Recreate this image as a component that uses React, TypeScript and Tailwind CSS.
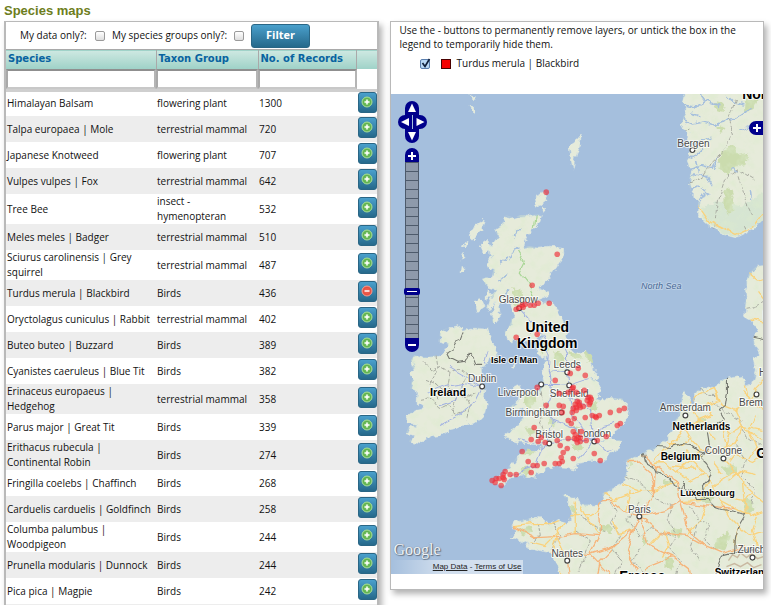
import React, { useState } from "react";

type Species = { name: string[]; group: string[]; count: string };

const species: Species[] = [
  { name: ["Himalayan Balsam"], group: ["flowering plant"], count: "1300" },
  { name: ["Talpa europaea | Mole"], group: ["terrestrial mammal"], count: "720" },
  { name: ["Japanese Knotweed"], group: ["flowering plant"], count: "707" },
  { name: ["Vulpes vulpes | Fox"], group: ["terrestrial mammal"], count: "642" },
  { name: ["Tree Bee"], group: ["insect -", "hymenopteran"], count: "532" },
  { name: ["Meles meles | Badger"], group: ["terrestrial mammal"], count: "510" },
  { name: ["Sciurus carolinensis | Grey", "squirrel"], group: ["terrestrial mammal"], count: "487" },
  { name: ["Turdus merula | Blackbird"], group: ["Birds"], count: "436" },
  { name: ["Oryctolagus cuniculus | Rabbit"], group: ["terrestrial mammal"], count: "402" },
  { name: ["Buteo buteo | Buzzard"], group: ["Birds"], count: "389" },
  { name: ["Cyanistes caeruleus | Blue Tit"], group: ["Birds"], count: "382" },
  { name: ["Erinaceus europaeus |", "Hedgehog"], group: ["terrestrial mammal"], count: "358" },
  { name: ["Parus major | Great Tit"], group: ["Birds"], count: "339" },
  { name: ["Erithacus rubecula |", "Continental Robin"], group: ["Birds"], count: "274" },
  { name: ["Fringilla coelebs | Chaffinch"], group: ["Birds"], count: "268" },
  { name: ["Carduelis carduelis | Goldfinch"], group: ["Birds"], count: "258" },
  { name: ["Columba palumbus |", "Woodpigeon"], group: ["Birds"], count: "244" },
  { name: ["Prunella modularis | Dunnock"], group: ["Birds"], count: "244" },
  { name: ["Pica pica | Magpie"], group: ["Birds"], count: "242" },
  { name: [""], group: [""], count: "" },
];

function LayerButton({ added, label, onClick }: { added: boolean; label: string; onClick: () => void }) {
  return (
    <button
      type="button"
      aria-label={label}
      onClick={onClick}
      className="flex h-[21px] w-[19px] items-start justify-center rounded-[3px] border border-[#2a6685] bg-linear-to-b from-[#4aa0cc] to-[#26698b] pt-[3px]"
    >
      <svg width="12" height="12" viewBox="0 0 12 12" aria-hidden="true">
        <circle cx="6" cy="6" r="5" fill={added ? "#ee5a4a" : "#6fbf5c"} stroke={added ? "#f59a8e" : "#a5dc97"} strokeWidth="1" />
        <circle cx="6" cy="6" r="3.6" fill="none" stroke={added ? "#d8493c" : "#55a446"} strokeWidth="0.6" />
        <path d={added ? "M3.5 6h5" : "M3.5 6h5M6 3.5v5"} stroke="#fff" strokeWidth="1.5" />
      </svg>
    </button>
  );
}

function Lines({ lines }: { lines: string[] }) {
  return (
    <>
      {lines.map((line) => (
        <span key={line} className="block">
          {line}
        </span>
      ))}
    </>
  );
}

function SpeciesGrid({ layer, onToggle }: { layer: string; onToggle: (name: string) => void }) {
  const head = "border-r border-[#a9a9a9] px-0.5 text-left align-top font-['DejaVu_Sans',Verdana,sans-serif] font-bold leading-[17px]";
  const box = "block h-5 w-full border-2 border-t-[#8f8f8f] border-r-[#b5b5b5] border-b-[#c8c8c8] border-l-[#a9a9a9] bg-white px-1 outline-none";
  return (
    <table className="w-full table-fixed border-collapse text-[10px] text-[#111]">
      <colgroup>
        <col className="w-[150px]" />
        <col className="w-[102px]" />
        <col />
        <col className="w-5" />
      </colgroup>
      <thead>
        <tr className="h-[19px] border-t border-[#a9a9a9] bg-linear-to-b from-[#cde8e1] to-[#9fd2c8] text-[#0863a0]">
          <th scope="col" className={head}>Species</th>
          <th scope="col" className={head}>Taxon Group</th>
          <th scope="col" className={head}>No. of Records</th>
          <th scope="col" aria-label="Layer" />
        </tr>
        <tr className="h-5 border-b-[3px] border-[#cfcfcf]">
          <td className="p-0"><input aria-label="Filter by species" className={box} /></td>
          <td className="p-0"><input aria-label="Filter by taxon group" className={box} /></td>
          <td className="p-0"><input aria-label="Filter by number of records" className={box} /></td>
          <td />
        </tr>
      </thead>
      <tbody>
        {species.map((s, i) => (
          <tr key={i} className="h-[26px] leading-[15px] odd:bg-white even:bg-[#ededed]">
            <td className="p-0 pl-px whitespace-nowrap"><Lines lines={s.name} /></td>
            <td className="p-0 pl-px whitespace-nowrap"><Lines lines={s.group} /></td>
            <td className="p-0 pl-px">{s.count}</td>
            <td className="p-0 pb-[3px] pl-px">
              <LayerButton
                added={s.name[0] === layer}
                label={s.name[0] === layer ? "Remove layer" : "Add layer"}
                onClick={() => onToggle(s.name[0])}
              />
            </td>
          </tr>
        ))}
      </tbody>
    </table>
  );
}

const britain =
  "M505 215L513 217 520 215 530 215 540 214 539 220 533 227 526 234 523 240 521 247 528 246 538 247 548 246 562 247 563 253 558 262 552 271 546 277 542 284 537 288 548 291 546 295 536 299 540 301 552 301 557 311 562 320 564 330 567 345 574 352 584 351 590 362 594 372 597 377 588 376 596 380 600 390 595 398 602 400 607 397 622 398 627 407 626 416 618 427 610 434 598 439 609 438 620 440 618 447 608 452 603 460 593 459 577 462 568 466 552 465 545 468 536 473 532 477 524 474 517 475 508 477 501 484 492 483 496 477 504 470 512 462 517 456 522 451 535 450 543 443 533 443 524 442 517 441 508 438 504 433 512 428 520 422 523 413 520 407 508 412 509 407 517 401 518 392 529 390 540 389 543 383 541 373 543 363 547 358 538 353 535 345 541 338 545 334 534 336 527 341 520 340 514 337 511 342 506 337 504 330 510 324 513 312 509 303 504 300 498 303 499 315 493 323 490 313 495 300 491 305 486 309 489 299 496 289 487 287 482 278 491 276 494 268 487 266 486 259 492 253 486 248 493 242 498 236 494 229 502 223Z";
const ireland =
  "M440 331L448 327 458 324 464 329 472 327 487 328 490 340 497 350 494 359 488 357 485 364 480 366 481 377 484 386 483 396 486 404 484 413 476 421 462 424 450 427 440 434 430 435 417 442 409 441 413 435 406 433 408 427 416 423 405 421 407 414 416 409 424 407 416 401 417 391 410 387 412 379 409 374 413 369 411 360 414 355 424 357 436 355 444 350 447 343 439 341Z";
const europe =
  "M510 527L513 521 524 519 540 516 548 523 556 519 567 523 571 513 568 502 562 494 571 496 577 497 579 503 596 504 603 499 602 493 612 487 623 482 626 471 625 460 633 456 643 452 652 447 660 443 668 436 671 425 677 417 680 403 683 390 688 398 693 404 693 393 700 387 714 384 727 377 740 375 745 384 752 381 755 370 753 360 758 351 753 345 751 335 756 331 752 323 749 318 743 316 745 300 744 287 749 272 757 265 768 264 768 580 562 580 557 564 550 552 540 549 531 547 521 540 509 536 517 532Z";
const norway =
  "M685 90L681 101 686 108 680 126 688 133 684 142 689 150 686 160 690 171 688 183 691 193 698 199 697 212 703 220 712 228 721 232 736 236 752 228 763 214 770 200 770 90Z";
const islands =
  "M467 234L474 224 483 218 481 228 472 239ZM461 244L467 240 465 246ZM463 251L460 259 464 255ZM460 264L459 272 464 269ZM479 244L486 239 489 247 483 252ZM474 300L480 297 484 306 477 311ZM486 288L491 294 485 298ZM512 386L518 384 522 390 514 393ZM534 195L543 192 546 198 540 203 536 206ZM541 205L545 209 541 211ZM568 146L574 142 577 137 580 134 578 146 574 155 572 168 570 158ZM468 94L475 95 473 99ZM469 103L474 108 472 113ZM511 366L514 362 514 367ZM567 466L574 464 575 468Z";

const greens =
  "M512 286l7 2 1 9-8 1zM509 300l8-6 4 8-7 3zM537 343l9-2 3 7-8 4zM554 350l9 3 1 9-9 2zM567 350l10 2 4 5-9 2zM524 392l8-1 3 9-7 7-5-6zM523 425l10 1 4 5-10 2zM519 468l7-3 4 6-6 4zM524 449l10 1-4 4-8-1zM588 402l8-2 2 9-8 2zM548 417l6 1-1 7-5-2zM571 424l8 2-4 5zM571 444l8-1 2 4-9 2zM720 151l12-7 4 10 10-2-2 12-12 2-6 8-9-7zM722 190l7-3 4 12-4 15-7-7zM745 97l12 2-4 9-10 3zM715 100l9 3-2 8-9-3zM714 124l10 3-4 6zM516 529l14-4 3 4-11 4zM602 522l9 3-3 6-9-3zM672 527l9 1-2 8-8-1zM714 538l12-8 3 6-5 12-10-2zM665 554l8 5-3 9-6-4zM662 478l7 2-2 5-6-2zM626 457l8 6-6 3zM583 350l7 4 2 9-6-3zM720 465l13-2 3 8-12 3zM740 498l9-2 4 12-8 6zM700 492l12 3-4 8-10-4zM568 503l6 1 1 9-5-3zM640 536l7 2-5 6zM694 420l6-6 4 4-5 6z";

const majorRoads =
  "M639 516L625 512 611 500 600 500M639 516L632 530 615 545 590 554 566 552M639 516L654 490 650 472 636 460 627 460M654 490L655 465 643 455M639 516L665 510 680 501 705 505 735 508M639 516L660 532 686 535 706 546 720 552 745 545M639 516L648 545 672 556 688 568 690 580M632 530L626 550 636 570M590 554L600 535 598 510 601 499M600 535L575 533 556 536 536 537 512 525M566 552L570 580M590 554L610 575M680 501L676 480 655 466M680 501L688 530 706 546M615 545L600 561 596 580M672 556L650 565 640 580";
const yellowRoads =
  "M512 525L530 523 551 523 571 515M555 535L545 545 530 541M555 535L571 515M555 535L562 550 566 552M575 533L575 500M600 535L588 520 580 505M571 515L590 515 600 507M690 403L700 393 714 387 718 400 705 404 692 412 700 420 684 427 690 437 680 445 668 443M705 404L712 415 700 420 712 430 722 425 730 433 742 426 763 430M684 427L676 440 662 450 654 460M742 426L735 410 722 405 714 387M735 410L750 402 763 410M750 402L755 388 763 380M730 433L726 447 712 452 700 448 690 437M726 447L740 457 752 462 763 455M723 458L735 470 742 482 750 490 763 500M700 448L690 460 676 472 664 462 654 463M690 460L704 472 712 485 720 500 735 508M712 485L735 470M676 472L690 480 704 472M720 500L728 515 738 525 734 545M735 508L750 515 763 510M738 525L750 535 763 530M708 480L700 500 680 501M654 490L676 480M745 515L742 482M722 425L726 447M763 440L742 426 735 442 726 447M698 205L710 222 736 235 752 227 763 212M747 272L757 280 763 278M750 318L763 322M757 292L763 300M745 384L748 400M602 493L614 500 640 490M622 484L640 490 654 490M625 512L630 490M648 545L660 532M556 536L548 560 562 575M686 535L700 520 705 505M742 391L750 398M755 415L748 430 756 445 748 458M738 450L730 460M716 440L708 432M665 452L676 458 688 452M670 465L680 466 694 468M728 480L740 470 756 474M752 490L744 500 730 497M757 515L752 530 757 545M664 530L668 545 662 556M612 520L618 534 632 530M686 450L694 458 704 456M714 462L722 472";
const blueRoads =
  "M536 303L519 305M519 308L528 318 540 330 545 340 550 355 549 370 552 385 551 400 545 412 553 420M561 340L566 352 567 370 569 385 570 400 574 415 585 430 594 440M553 420L570 427 585 436 594 440M553 420L548 435 549 442M549 442L570 440 594 440M549 442L540 450 535 466 520 471 505 478M549 442L532 443 517 439M541 384L556 384 569 385 590 378M549 372L567 370M594 440L605 450 612 449M594 440L602 425 615 422M594 440L592 425 590 408 570 395M594 440L578 458M482 386L465 382 445 385 428 392M482 386L475 400 460 414 440 425M482 386L482 370 488 350M482 386L462 374 448 366M465 382L455 400 440 405";
const borders =
  "M463 333L460 341 455 343 453 348 447 352 450 358 458 362 465 361 468 354 473 359 475 364 481 364M643 453L645 461 652 465 655 472 663 474 669 478 672 485 680 487 684 480 684 488 694 492 696 499 708 499 716 507 722 509 735 511 745 514 739 524 735 538 734 551 722 554 716 568M657 446L670 447 680 443 690 444 698 450 706 452 701 459 706 464 711 472 708 480 702 486 704 497M706 432L708 444 705 452 698 456M727 377L727 392 725 405 719 410 724 418 716 424M734 551L748 548 763 552M752 337L768 340";
const counties =
  "M425 362L432 370 440 366 450 372 458 368 470 376M425 380L435 384 445 392 455 390 462 398 475 392M420 400L432 398 440 408 448 404 455 414 466 410M436 355L438 368 430 384 438 398M450 372L448 384 456 398 452 414M465 378L463 392 470 406 466 420M541 392L543 405 540 420 545 436M555 330L545 322 530 332M608 497L616 510 610 522 620 535 612 548 622 560 615 575M625 475L640 482 655 498 672 505 668 520 676 535 668 548 680 560 676 575M575 530L590 540 585 555 578 570M640 500L628 520 640 535 652 528 670 535M690 505L698 520 710 525 705 540 715 550M640 548L632 560 645 575M698 520L690 545 700 560M538 522L540 535 530 545M553 522L560 535 550 548M580 515L592 525 605 530M712 400L725 412 740 420 745 435 760 445M735 445L745 460 740 475 755 490 750 505M672 130L683 132 690 128M680 181L690 184 702 178 712 162 725 150 732 135 728 120 735 100M716 220L718 200 724 180 738 170 755 180M736 170L745 200 752 215M708 235L714 224M743 225L748 237M745 308L756 306 763 302M700 388L706 396 716 396";
const fjords =
  "M681 119L692 124 703 122 715 125 728 120 740 116 752 108M686 160L696 155 703 148M690 170L700 165 712 168 718 158M688 178L694 174 706 176M691 190L697 186 704 190M683 105L695 107 706 101 720 106M700 94L705 101M690 146L700 141 710 138M706 176L712 186M699 200L704 192 710 195M750 189L751 200M731 168L738 172M740 130L750 126 758 132M690 113L700 116M726 95L734 103 744 105M695 160L698 172M513 236L520 228M500 262L510 256 518 247M497 282L508 274M502 296L510 291";

const records: [number, number][] = [
  [546, 192], [557, 254], [532, 285], [549, 303], [538, 303], [534, 305], [530, 305], [525, 304], [522, 305], [519, 307], [516, 309], [523, 307],
  [516, 337], [537, 334], [578, 368], [585, 375], [570, 373], [555, 380], [537, 387], [572, 388], [546, 405], [559, 405], [563, 406], [573, 387],
  [584, 390], [559, 393], [568, 392], [576, 392], [588, 397], [590, 402], [587, 400], [591, 399], [577, 401], [575, 404], [579, 402], [573, 408],
  [576, 410], [580, 407], [583, 406], [572, 412], [562, 412], [585, 417], [592, 415], [596, 417], [599, 415], [595, 416], [610, 412], [619, 410], [624, 408],
  [620, 423], [617, 425], [568, 420], [571, 423], [574, 418], [581, 431], [575, 434], [573, 431], [578, 437], [574, 438], [577, 442],
  [580, 441], [568, 438], [557, 440], [534, 427], [531, 439], [538, 441], [541, 437], [545, 442], [560, 445], [567, 448], [563, 452], [561, 457],
  [562, 461], [559, 463], [555, 463], [544, 463], [537, 465], [533, 465], [531, 472], [528, 461], [522, 451], [516, 474], [510, 474], [505, 471],
  [503, 474], [504, 479], [501, 485], [496, 478], [492, 480], [495, 482], [499, 478], [573, 458], [594, 453], [600, 460], [597, 440], [606, 436],
  [586, 440], [503, 477], [589, 404], [576, 407], [579, 405], [590, 397], [576, 439], [580, 437],
];

const towns: [number, number][] = [
  [692, 150], [519, 308], [482, 386], [541, 384], [567, 372], [569, 385], [561, 412], [549, 443], [594, 441],
  [685, 415], [756, 394], [723, 458], [639, 516], [567, 560], [752, 557],
];

type Label = { t: string; x: number; y: number; s: number; b?: boolean };
const labels: Label[] = [
  { t: "Bergen", x: 693, y: 147, s: 10 },
  { t: "Glasgow", x: 518, y: 303, s: 10 },
  { t: "Dublin", x: 482, y: 382, s: 10 },
  { t: "Leeds", x: 567, y: 368, s: 10 },
  { t: "Liverpool", x: 518, y: 396, s: 10 },
  { t: "Sheffield", x: 569, y: 397, s: 10 },
  { t: "Birmingham", x: 532, y: 416, s: 10 },
  { t: "Bristol", x: 549, y: 438, s: 10 },
  { t: "London", x: 594, y: 437, s: 10 },
  { t: "Amsterdam", x: 685, y: 411, s: 10 },
  { t: "Cologne", x: 723, y: 454, s: 10 },
  { t: "Paris", x: 639, y: 512, s: 10 },
  { t: "Nantes", x: 567, y: 556, s: 10 },
  { t: "Zurich", x: 751, y: 552, s: 10 },
  { t: "Bremen", x: 756, y: 406, s: 10 },
  { t: "Hamburg", x: 779, y: 376, s: 10 },
  { t: "United", x: 547, y: 332, s: 14, b: true },
  { t: "Kingdom", x: 547, y: 348, s: 14, b: true },
  { t: "Ireland", x: 448, y: 396, s: 11, b: true },
  { t: "Isle of Man", x: 514, y: 363, s: 9, b: true },
  { t: "Netherlands", x: 701, y: 430, s: 10, b: true },
  { t: "Belgium", x: 680, y: 460, s: 10, b: true },
  { t: "Luxembourg", x: 707, y: 495, s: 9, b: true },
  { t: "Switzerland", x: 742, y: 575, s: 10, b: true },
  { t: "Norway", x: 767, y: 99, s: 14, b: true },
  { t: "France", x: 642, y: 580, s: 14, b: true },
  { t: "Germany", x: 786, y: 458, s: 14, b: true },
  { t: "Denmark", x: 786, y: 319, s: 11, b: true },
];

function MapDrawing() {
  return (
    <svg
      className="block h-full w-full bg-[#a5bfdd]"
      viewBox="391 94 372 480"
      preserveAspectRatio="xMinYMin slice"
      role="img"
      aria-label="Map of Turdus merula records around the United Kingdom"
    >
      <defs>
        <filter id="coast" x="-5%" y="-5%" width="110%" height="110%">
          <feTurbulence type="fractalNoise" baseFrequency="0.16" numOctaves="3" seed="4" result="n" />
          <feDisplacementMap in="SourceGraphic" in2="n" scale="7" xChannelSelector="R" yChannelSelector="G" />
        </filter>
        <filter id="wander" x="-5%" y="-5%" width="110%" height="110%">
          <feTurbulence type="fractalNoise" baseFrequency="0.09" numOctaves="2" seed="9" result="n" />
          <feDisplacementMap in="SourceGraphic" in2="n" scale="7" xChannelSelector="R" yChannelSelector="G" />
        </filter>
        <filter id="relief" x="0" y="0" width="100%" height="100%">
          <feTurbulence type="fractalNoise" baseFrequency="0.11" numOctaves="3" seed="21" />
          <feColorMatrix values="0 0 0 0 0.72  0 0 0 0 0.83  0 0 0 0 0.62  2.6 0 0 0 -1.15" />
          <feComposite in2="SourceGraphic" operator="in" />
        </filter>
        <clipPath id="land">
          <path d={britain + ireland + europe + norway} />
        </clipPath>
      </defs>
      <g filter="url(#coast)" transform="translate(1 1)">
        <path d={britain + ireland + europe + norway + islands} fill="#e6ebda" stroke="#dfe9e0" strokeWidth="0.6" />
        <path d="M700 208L715 200 740 205 770 188V212L750 227 736 235 720 231 705 220Z" fill="#d6e5d2" />
        <path d={greens} fill="#cbdcae" />
      </g>
      <path d={britain + ireland + europe + norway} filter="url(#relief)" opacity="0.55" />
      <path d={fjords} fill="none" stroke="#a5bfdd" strokeWidth="1.6" filter="url(#coast)" />
      <g clipPath="url(#land)" fill="none" strokeLinejoin="round">
        <g filter="url(#wander)">
          <path d={counties} stroke="#a3a59c" strokeWidth="0.9" strokeDasharray="4 1.5" />
          <path d={yellowRoads} stroke="#fad27c" strokeWidth="1.3" />
          <path d={majorRoads} stroke="#f6b47a" strokeWidth="1.3" />
          <path d={blueRoads} stroke="#9fafe2" strokeWidth="1" />
          <path d="M517 250L524 262 519 272 527 282 533 295M535 216L533 228 524 240" stroke="#a9d696" strokeWidth="1.2" />
          <path d={borders} stroke="#777971" strokeWidth="1.1" />
        </g>
      </g>
      <path
        d="M728 560l4-6 5 3 3-5 6 5 5-4 6 5 6-2M726 566l8-3 6 3 7-4 6 5 8-3"
        fill="none"
        stroke="#c9b9a2"
        strokeWidth="1.4"
      />
      <g fill="#fff" stroke="#444" strokeWidth="1.2">
        {towns.map(([x, y]) => (
          <circle key={`${x}-${y}`} cx={x} cy={y} r="2.4" />
        ))}
      </g>
      <g
        textAnchor="middle"
        paintOrder="stroke"
        stroke="#fff"
        strokeOpacity="0.75"
        strokeWidth="2"
        strokeLinejoin="round"
        className="font-['Liberation_Sans',Arial,sans-serif]"
      >
        {labels.map((l) => (
          <text key={l.t} x={l.x} y={l.y} fontSize={l.s} fontWeight={l.b ? 700 : 400} fill={l.b ? "#000" : "#4a4a4a"}>
            {l.t}
          </text>
        ))}
        <text x="661" y="289" fontSize="9" fontStyle="italic" fill="#4a6a96" strokeOpacity="0.25">
          North Sea
        </text>
      </g>
      <g fill="#f02f38" fillOpacity="0.66">
        {records.map(([x, y]) => (
          <circle key={`${x}-${y}`} cx={x} cy={y} r="2.8" />
        ))}
      </g>
    </svg>
  );
}

function PanButton({ label, shape, arrow }: { label: string; shape: string; arrow: string }) {
  return (
    <button type="button" aria-label={label} className={`flex h-[14px] w-[14px] items-center justify-center bg-[#00008b] ${shape}`}>
      <svg width="14" height="14" viewBox="0 0 14 14" aria-hidden="true">
        <path d={arrow} fill="#fff" />
      </svg>
    </button>
  );
}

function MapControls() {
  const [zoom, setZoom] = useState(5);
  return (
    <div className="absolute top-[7px] left-[7px] flex w-[29px] flex-col items-center">
      <PanButton label="Pan up" shape="rounded-t-full" arrow="M7 2.5L11 11H3z" />
      <div className="flex gap-px">
        <PanButton label="Pan left" shape="rounded-l-full" arrow="M3 7l8-4v8z" />
        <PanButton label="Pan right" shape="rounded-r-full" arrow="M11.500 7l-8-4v8z" />
      </div>
      <PanButton label="Pan down" shape="rounded-b-full" arrow="M7 11.500L11 3H3z" />
      <div className="mt-[5px] flex flex-col items-center">
        <PanButton label="Zoom in" shape="rounded-t-full" arrow="M6 4h2v3h3v2H8v3H6V9H3V7h3z" />
        <input
          type="range"
          aria-label="Zoom level"
          min={0}
          max={19}
          value={zoom}
          onChange={(e) => setZoom(Number(e.target.value))}
          className="m-0 h-[176px] w-[14px] cursor-pointer appearance-none bg-[repeating-linear-gradient(to_bottom,#4d5a6b_0px,#4d5a6b_1px,#8e9aab_1px,#8e9aab_9px)] shadow-[inset_1px_0_#4d5a6b,inset_-1px_0_#4d5a6b] [direction:rtl] [writing-mode:vertical-lr] [&::-webkit-slider-thumb]:-mx-px [&::-webkit-slider-thumb]:h-[7px] [&::-webkit-slider-thumb]:w-4 [&::-webkit-slider-thumb]:appearance-none [&::-webkit-slider-thumb]:rounded-[2px] [&::-webkit-slider-thumb]:border-[3px] [&::-webkit-slider-thumb]:border-[#00008b] [&::-webkit-slider-thumb]:bg-white"
        />
        <PanButton label="Zoom out" shape="rounded-b-full" arrow="M3 6h8v2H3z" />
      </div>
    </div>
  );
}

export default function App() {
  const [layer, setLayer] = useState("Turdus merula | Blackbird");
  const [visible, setVisible] = useState(true);
  const card = "min-w-0 border border-[#b9b9b9] bg-white shadow-[3px_4px_6px_rgba(0,0,0,0.3)]";
  const tick =
    "mr-[7px] h-[10px] w-[10px] appearance-none rounded-[2px] border border-[#9a9a9a] bg-linear-to-b from-white to-[#dedede]";

  return (
    <main className="h-screen overflow-hidden bg-white pr-[7px] pl-1 font-['Open_Sans',sans-serif] text-[10px] text-[#111]">
      <h1 className="pt-px font-['Liberation_Sans',Arial,sans-serif] text-[13px] leading-5 font-bold text-[#6d7d20]">
        Species maps
      </h1>
      <div className="grid grid-cols-2 items-start gap-[11px]">
        <section className={`${card} border-r-2 border-l-2`}>
          <form className="flex h-[27px] items-center pl-[14px]" onSubmit={(e) => e.preventDefault()}>
            <label htmlFor="mine" className="w-[75px]">My data only?:</label>
            <input id="mine" type="checkbox" className={tick} />
            <label htmlFor="groups" className="w-[122px]">My species groups only?:</label>
            <input id="groups" type="checkbox" className={tick} />
            <button
              type="submit"
              className="h-6 w-[59px] rounded-[3px] border border-[#2a6685] bg-linear-to-b from-[#4aa0cc] to-[#26698b] text-[11px] font-bold text-white"
            >
              Filter
            </button>
          </form>
          <SpeciesGrid layer={layer} onToggle={(name) => setLayer(name === layer ? "" : name)} />
        </section>

        <section className={card}>
          <div className="h-[72px] px-[9px] pt-px">
            <p className="leading-[14px]">
              Use the - buttons to permanently remove layers, or untick the box in the legend to temporarily hide them.
            </p>
            <label className="flex items-center pt-[5px] pl-5 leading-[15px]">
              <input
                type="checkbox"
                checked={visible}
                onChange={(e) => setVisible(e.target.checked)}
                className="peer h-[10px] w-[10px] appearance-none rounded-[2px] border border-[#5b7fae] bg-[#b9d8f5]"
              />
              <svg className="-ml-[10px] hidden peer-checked:block" width="11" height="11" viewBox="0 0 11 11" aria-hidden="true">
                <path d="M2.500 5l2.500 3.500L9.500 1" fill="none" stroke="#10203c" strokeWidth="1.700" />
              </svg>
              <span className="mr-[6px] ml-[10px] h-[10px] w-[10px] border border-[#4a0000] bg-[#f50000]" />
              Turdus merula | Blackbird
            </label>
          </div>
          <div className="relative h-[480px] overflow-hidden">
            <MapDrawing />
            <MapControls />
            <button
              type="button"
              aria-label="Show layers"
              className="absolute top-[27px] right-0 flex h-[14px] w-[14px] items-center justify-center rounded-l-full bg-[#00008b]"
            >
              <svg width="14" height="14" viewBox="0 0 14 14" aria-hidden="true">
                <path d="M7 3h2v3h3v2H9v3H7V8H4V6h3z" fill="#fff" />
              </svg>
            </button>
            <span className="absolute bottom-[14px] left-[3px] font-['Liberation_Serif',serif] text-[16px] leading-5 text-[#eef2f6] [text-shadow:1px_1px_1px_#5f6b7a,0_0_1px_#6d7987]">
              Google
            </span>
            <div className="absolute bottom-0 left-0 w-[132px] bg-linear-to-r from-transparent to-white/50 to-40% pr-px text-right font-['Liberation_Sans',Arial,sans-serif] text-[8px] leading-[14px] text-[#222]">
              <a href="#map-data" className="underline">Map Data</a>
              {" - "}
              <a href="#terms" className="underline">Terms of Use</a>
            </div>
          </div>
          <div className="h-[15px]" />
        </section>
      </div>
    </main>
  );
}
